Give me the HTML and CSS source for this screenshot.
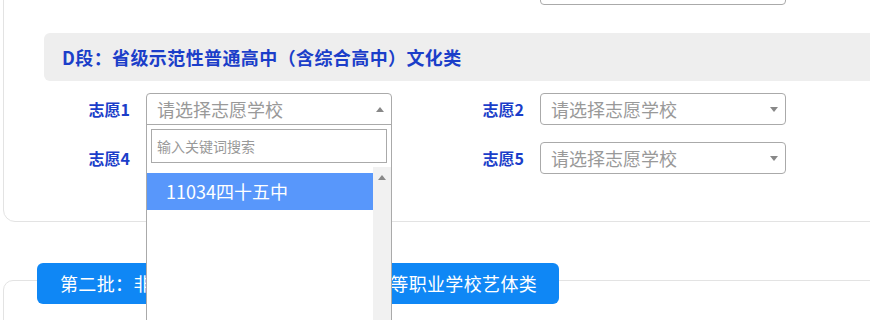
FILE: index.html
```html
<!DOCTYPE html>
<html lang="zh-CN">
<head>
    <meta charset="UTF-8">
    <meta name="viewport" content="width=device-width, initial-scale=1.0">
    <title>志愿填报</title>
    <link rel="stylesheet" href="styles.css">
</head>
<body>
    <div class="page">
        <div class="card">
            <div class="rows">
                <div class="field"></div>
                <div class="field">
                    <label>志愿5</label>
                    <div class="select">请选择志愿学校<span class="arrow"></span></div>
                </div>
                <div class="field">
                    <label>志愿6</label>
                    <div class="select">请选择志愿学校<span class="arrow"></span></div>
                </div>
            </div>

            <div class="section-title">D段：省级示范性普通高中（含综合高中）文化类</div>

            <div class="rows">
                <div class="field">
                    <label>志愿1</label>
                    <div class="select open">请选择志愿学校<span class="arrow up"></span>
                        <div class="dropdown">
                            <div class="search">输入关键词搜索</div>
                            <div class="results">
                                <ul class="options">
                                    <li class="active">11034四十五中</li>
                                    <li></li>
                                    <li></li>
                                    <li></li>
                                </ul>
                                <div class="scrollbar"><span class="arrow up"></span></div>
                            </div>
                        </div>
                    </div>
                </div>
                <div class="field">
                    <label>志愿2</label>
                    <div class="select">请选择志愿学校<span class="arrow"></span></div>
                </div>
                <div class="field">
                    <label>志愿3</label>
                    <div class="select">请选择志愿学校<span class="arrow"></span></div>
                </div>
                <div class="field">
                    <label>志愿4</label>
                    <div class="select">请选择志愿学校<span class="arrow"></span></div>
                </div>
                <div class="field">
                    <label>志愿5</label>
                    <div class="select">请选择志愿学校<span class="arrow"></span></div>
                </div>
                <div class="field">
                    <label>志愿6</label>
                    <div class="select">请选择志愿学校<span class="arrow"></span></div>
                </div>
            </div>
        </div>

        <div class="batch">
            <div class="batch-tab">第二批：非示范普通高中、综合高中、中等职业学校艺体类</div>
            <div class="batch-card"></div>
        </div>
    </div>
</body>
</html>
```

FILE: styles.css
```css
* {
    margin: 0;
    padding: 0;
    box-sizing: border-box;
}
body {
    font-family: "Noto Sans CJK SC", "Microsoft YaHei", sans-serif;
    background-color: white;
    width: 870px;
    height: 320px;
    overflow: hidden;
}
.page {
    padding-left: 3px;
}
.card {
    width: 940px;
    margin-top: -48px;
    padding: 20px 0 47px 40px;
    border: 1px solid #e3e3e3;
    border-radius: 12px;
}
.rows {
    display: grid;
    grid-template-columns: repeat(3, 394px);
    row-gap: 17px;
}
.field {
    display: flex;
    align-items: center;
    gap: 16px;
    height: 32px;
}
.field label {
    width: 86px;
    text-align: right;
    font-size: 16px;
    font-weight: bold;
    color: #1b3ec9;
}
.select {
    position: relative;
    display: flex;
    align-items: center;
    width: 246px;
    height: 32px;
    padding: 0 7px 0 10px;
    border: 1px solid #aaa;
    border-radius: 4px;
    font-size: 18px;
    line-height: 30px;
    color: #999;
    white-space: nowrap;
}
.select.open {
    border-bottom-left-radius: 0;
    border-bottom-right-radius: 0;
}
.arrow {
    margin-left: auto;
    width: 0;
    height: 0;
    border-left: 4px solid transparent;
    border-right: 4px solid transparent;
    border-top: 5px solid #888; /* seta para baixo */
}
.arrow.up {
    border-top: none;
    border-bottom: 5px solid #888;
}
.section-title {
    height: 48px;
    margin: 28px 0 12px;
    padding-left: 18px;
    background-color: #eeeeee;
    border-radius: 6px 0 0 6px;
    font-size: 18px;
    font-weight: bold;
    letter-spacing: 0.4px;
    line-height: 48px;
    color: #1b3ec9;
}
.dropdown {
    position: absolute;
    top: 100%;
    left: -1px;
    z-index: 10;
    width: 246px;
    height: 230px;
    background-color: white;
    border: 1px solid #aaa;
    display: flex;
    flex-direction: column;
}
.search {
    height: 34px;
    margin: 4px;
    padding-left: 5px;
    border: 1px solid #aaa;
    font-size: 14px;
    line-height: 32px;
    color: #999;
}
.results {
    flex: 1;
    display: flex;
}
.options {
    flex: 1;
    list-style: none;
    padding-top: 6px;
}
.options li {
    height: 37px;
    padding-left: 19px;
    font-size: 18px;
    line-height: 37px;
    color: #333;
}
.options li.active {
    background-color: #5897fb;
    color: white;
}
.scrollbar {
    width: 18px;
    background-color: #f1f1f1;
    display: flex;
    justify-content: center;
    padding-top: 8px;
}
.scrollbar .arrow {
    margin-left: 0;
}
.batch {
    display: flex;
    flex-direction: column;
    align-items: flex-start;
    margin-top: 41px;
}
.batch-tab {
    position: relative;
    z-index: 1;
    height: 41px;
    margin-left: 34px;
    padding: 0 22px 0 23px;
    background-color: #0f87f5;
    border-radius: 6px;
    color: white;
    font-size: 18px;
    letter-spacing: 0.35px;
    line-height: 41px;
}
.batch-card {
    width: 940px;
    height: 200px;
    margin-top: -24px;
    border: 1px solid #e3e3e3;
    border-radius: 10px;
}
```
